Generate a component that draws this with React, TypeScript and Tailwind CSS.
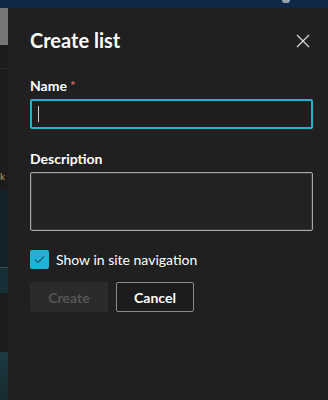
import React from "react";

const font = { fontFamily: 'Lato, "Open Sans", Arial, sans-serif' };

export default function App() {
  return (
    <div className="w-[328px] h-[400px] flex flex-col bg-[#1b1b1b] overflow-hidden" style={font}>
      {/* top bar */}
      <div className="h-[8px] bg-[#0f2846] shrink-0 flex justify-end pr-[38px]">
        <div className="w-[8px] h-[3px] bg-[#9aa3ad] rounded-b-sm" />
      </div>

      <div className="flex flex-1">
        {/* dimmed page behind */}
        <div className="w-[8px] shrink-0 flex flex-col bg-[#1c1c1c]">
          <div className="h-[37px] bg-[#777]" />
          <div className="h-[23px]" />
          <div className="h-px bg-[#2a2a2a]" />
          <div className="h-[121px] flex items-end">
            <span className="text-[10px] leading-none text-[#b59a6a] mb-[9px]">k</span>
          </div>
          <div className="h-[77px] bg-[#14232a]" />
          <div className="h-px bg-[#3a4a50]" />
          <div className="h-[25px] bg-[#173038]" />
          <div className="h-[59px] bg-[#1c1c1c]" />
          <div className="flex-1 bg-gradient-to-b from-[#1d3a42] to-[#172a30]" />
        </div>

        {/* panel */}
        <div className="flex-1 bg-[#202020] pl-[22px] pr-[15px] pt-[15px]">
          <div className="flex items-center justify-between h-[34px]">
            <h1 className="text-[20px] font-bold text-white leading-none">Create list</h1>
            <svg width="14" height="14" viewBox="0 0 14 14" className="mr-[3px] mt-[2px]">
              <path d="M1 1L13 13M13 1L1 13" stroke="#d6d6d6" strokeWidth="1.3" />
            </svg>
          </div>

          <div className="mt-[19px]">
            <label className="block text-[14px] font-bold text-white leading-[20px]">
              Name <span className="text-[#e0686a] text-[12px] align-top">*</span>
            </label>
            <div className="mt-[3px] h-[30px] border-2 border-[#22b2d6] rounded-[2px] bg-[#1e1e1e] flex items-center pl-[6px]">
              <div className="w-px h-[16px] bg-[#cfcfcf]" />
            </div>
          </div>

          <div className="mt-[20px]">
            <label className="block text-[14px] font-bold text-white leading-[20px]">Description</label>
            <div className="mt-[3px] h-[59px] border border-[#a8a8a8] rounded-[2px] bg-[#222] shadow-[inset_0_0_0_1px_#3a3a3a]" />
          </div>

          <div className="mt-[18px] flex items-center gap-[7px]">
            <div className="w-[19px] h-[19px] rounded-[2px] bg-[#21b3d7] flex items-center justify-center">
              <svg width="11" height="9" viewBox="0 0 11 9">
                <path d="M1 4.5L4 7.5L10 1.5" stroke="#1a5f70" strokeWidth="1.2" fill="none" />
              </svg>
            </div>
            <span className="text-[14px] text-white">Show in site navigation</span>
          </div>

          <div className="mt-[12px] flex gap-[8px]">
            <button className="w-[78px] h-[30px] rounded-[2px] bg-[#2b2b2b] text-[14px] font-bold text-[#555]">
              Create
            </button>
            <button className="w-[78px] h-[30px] rounded-[2px] bg-[#1c1c1c] border border-[#8a8a8a] text-[14px] font-bold text-white">
              Cancel
            </button>
          </div>
        </div>
      </div>
    </div>
  );
}
